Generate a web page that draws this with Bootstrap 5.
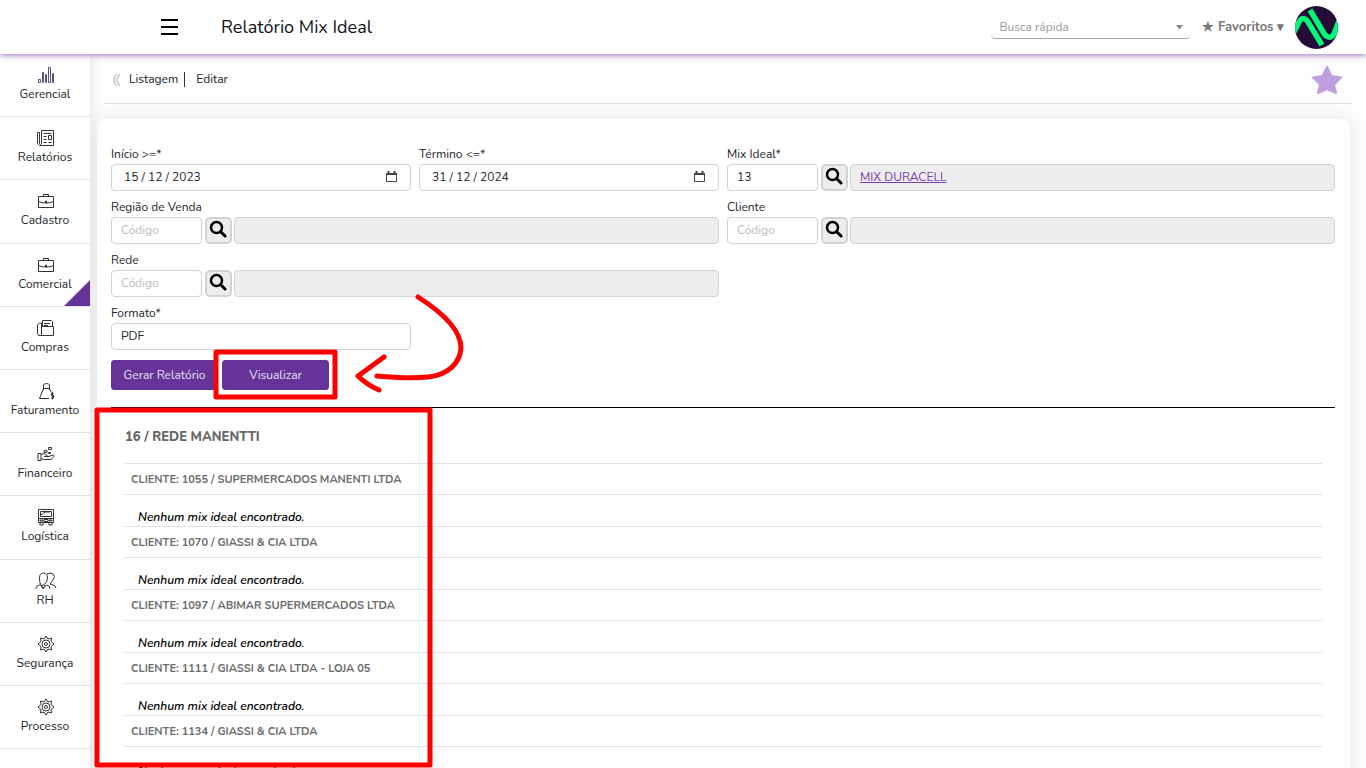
<!DOCTYPE html>
<html lang="pt-BR">
<head>
<meta charset="utf-8">
<meta name="viewport" content="width=device-width, initial-scale=1">
<title>Relatório Mix Ideal</title>
<link href="https://cdn.jsdelivr.net/npm/bootstrap@5.3.0/dist/css/bootstrap.min.css" rel="stylesheet">
<style>
  :root { --brand: #663399; --line: #dee2e6; }
  body { font-family: Nunito, "Noto Sans", sans-serif; font-size: 12px; line-height: 18px; color: #212529; background: #fdfdfd; }
  .topbar { height: 54px; z-index: 3; box-shadow: 0 1px 6px rgba(102,51,153,.7); padding-right: 28px; }
  .menu-toggle { margin-left: 161px; width: 18px; }
  .page-title { font-size: 18px; line-height: 24px; color: #111; margin-left: 42px; }
  .quick-search { width: 199px; margin-right: 12px; }
  .quick-search select { appearance: none; width: 100%; height: 23px; border: 0; border-bottom: 1px solid #aaa; border-radius: 4px; padding: 0 8px; color: #999; background: #fff; }
  .quick-search svg { right: 7px; top: 9px; pointer-events: none; }
  .fav-menu { color: #777; font-weight: 700; font-size: 13px; margin-right: 11px; }
  .sidebar { width: 90px; padding-bottom: 19px; box-shadow: 0 0 12px rgba(0,0,0,.12); z-index: 2; }
  .sidebar a { min-height: 50px; padding-top: 12px; border-bottom: 1px solid var(--line); color: #212529; }
  .sidebar svg { display: block; margin: 0 auto 1px; fill: none; stroke: #333; stroke-width: 1; position: relative; left: 1px; }
  .sidebar .current::after { content: ""; position: absolute; right: 0; bottom: 0; border: 13px solid var(--brand); border-top-color: transparent; border-left-color: transparent; }
  .content-area { padding: 0 16px 0 7px; overflow: auto; scrollbar-width: none; }
  .content-area::-webkit-scrollbar { display: none; }
  .crumbs { height: 50px; margin: 0 -2px 15px 7px; border-bottom: 1px solid var(--line); padding: 2px 9px 0 8px; }
  .crumbs a { color: #212529; line-height: 15px; }
  .crumbs a + a { border-left: 1px solid #333; padding-left: 11px; margin-left: 6px; }
  .panel { background: #fff; border-radius: 8px; box-shadow: 0 0 22px rgba(0,0,0,.09); padding: 26px 15px 20px 14px; min-height: calc(100vh - 120px); }
  .fields { --bs-gutter-x: 8px; }
  .field-block { margin-bottom: 7px; }
  .field-block label { display: block; line-height: 19px; }
  .field-block .form-control { font-size: 12px; line-height: 18px; height: 27px; padding: 3px 9px 4px; border-color: #ced4da; border-radius: 4px; color: #212529; background: #fff; }
  .field-block .form-control::placeholder { color: #bbb; }
  .field-block .form-control.date-box { padding-left: 12px; }
  .field-block .form-control.locked { background: #ededed; }
  .date-icon { right: 14px; top: 7px; }
  .code-box { flex: 0 0 91px; margin-right: 3px; }
  .find-btn { flex: 0 0 27px; height: 27px; padding: 0 1px 3px 0; border: 2px solid #ced4da; border-radius: 5px; background: #ededed; margin-right: 2px; }
  .find-btn svg { display: block; margin: auto; }
  .locked a { color: #7b3fa9; }
  .actions { padding-top: 3px; }
  .btn-brand { --bs-btn-color: #e9e0f2; --bs-btn-bg: #663399; --bs-btn-border-color: #663399; --bs-btn-hover-bg: #552a80; --bs-btn-hover-color: #fff; width: 107px; height: 30px; font-size: 12px; line-height: 18px; padding: 0; border-radius: 3px; }
  .report { border-top: 1px solid #000; margin-top: 17px; padding: 20px 13px 0 14px; }
  .report h2 { font-size: 13px; line-height: 18px; font-weight: 800; color: #666; margin: 0 0 17px; }
  .report table { width: 100%; }
  .report th { height: 31px; font-size: 11px; font-weight: 700; color: #6c6c6c; border: solid #dee2e6; border-width: 1px 0; padding: 1px 6px 0; }
  .report td { height: 32px; font-style: italic; font-weight: 600; color: #000; vertical-align: bottom; padding: 0 13px; }
  .marks { z-index: 5; pointer-events: none; }
</style>
</head>
<body class="vh-100 d-flex flex-column overflow-hidden position-relative">
<header class="topbar bg-white d-flex align-items-center flex-shrink-0 position-relative">
  <button class="menu-toggle btn p-0 border-0 rounded-0" type="button" aria-label="Menu"><svg class="d-block" width="18" height="18" stroke="#000" stroke-width="2"><path d="M0 2h17M0 9h17M0 16h17"/></svg></button>
  <h1 class="page-title mb-0 fw-normal">Relatório Mix Ideal</h1>
  <div class="quick-search position-relative ms-auto">
    <select aria-label="Busca rápida"><option>Busca rápida</option></select>
    <svg class="position-absolute" width="7" height="5" fill="#888"><path d="M0 0h7L3.500 4.500z"/></svg>
  </div>
  <a class="fav-menu text-decoration-none" href="#">★ Favoritos ▾</a>
  <svg width="43" height="43" viewBox="0 0 43 43" aria-label="Logo"><defs><clipPath id="disc"><circle cx="21.500" cy="21.500" r="21.500"/></clipPath></defs><g clip-path="url(#disc)"><path fill="#260a37" d="M0 0h43v43H0z"/><g fill="none" stroke="#00f876" stroke-width="5.500"><path d="M-1 26L4 16Q8 9 13 16L27 39"/><path d="M15 4L30 29Q35 34 39 28L44 15"/></g></g></svg>
</header>
<div class="d-flex flex-fill" style="min-height:0">
  <nav class="sidebar bg-white d-flex flex-column flex-shrink-0 text-center">
    <a class="flex-fill text-decoration-none" href="#"><svg width="18" height="18"><path d="M1.500 16.500v-3h2v3zM5.500 16.500v-10h1v10zM8.500 16.500v-8h1v8zM11.500 16.500v-15h2v15zM15.500 16.500v-9h1v9z" stroke="#555577"/></svg>Gerencial</a>
    <a class="flex-fill text-decoration-none" href="#"><svg width="18" height="18"><path d="M4.500 1.500h12v15h-14l-2-2v-11h2v11l1 1 1-1zM6.500 4.500h8M6.500 7.500h3M6.500 10.500h3M6.500 13.500h3M11.500 6.500h3v4h-3zM11.500 13.500h3"/></svg>Relatórios</a>
    <a class="flex-fill text-decoration-none" href="#"><svg width="18" height="18"><path d="M1.500 4.500h15v11h-15zM6.500 4v-1.500h5v1.500M1.500 9.500c4 2 11 2 15 0M8.500 9v2h1v-2z"/></svg>Cadastro</a>
    <a class="current flex-fill text-decoration-none position-relative" href="#"><svg width="18" height="18"><path d="M1.500 4.500h15v11h-15zM6.500 4v-1.500h5v1.500M1.500 9.500c4 2 11 2 15 0M8.500 9v2h1v-2z"/></svg>Comercial</a>
    <a class="flex-fill text-decoration-none" href="#"><svg width="18" height="18"><path d="M4.500 7.500h12v9h-12zM4.500 16.500h-3l-1-2V6l2-2h2v12M5.500 7V1.500h9l1 1V7M7 4.500h6M7 6.500h4"/></svg>Compras</a>
    <a class="flex-fill text-decoration-none" href="#"><svg width="18" height="18"><path d="M12 16.500H2.500l4-10h6l2 4M6.500 8V3q.5-1.500 3-1.500t3 1.500v5M16.500 11.500h-2v2h2v2.500h-2.500M15.500 10v7.500"/></svg>Faturamento</a>
    <a class="flex-fill text-decoration-none" href="#"><svg width="18" height="18"><path d="M1 8.500h3v7H1zM4 9.500l3-1 4 3h-4M10 12l6-2c2 0 0 3-2 4.500H7l-3-1M7 5.500h3v2H7zM11.500 2.500h3v2h-3zM11.500 7.500h2v1h-2z"/></svg>Financeiro</a>
    <a class="flex-fill text-decoration-none" href="#"><svg width="18" height="18"><path d="M1.500 1.500h15v13h-15zM3.500 3.500h11v5h-11zM2 10.500h14M3 12h3v1H3zM12 12h3v1h-3zM7 11.500h4v2H7zM3 15v2h3v-2M12 15v2h3v-2M4 7l4-3h5"/></svg>Logística</a>
    <a class="flex-fill text-decoration-none" href="#"><svg width="24" height="18"><path d="M5.500 6q0-5 4-5t4 5-4 7-4-7M2 17q0-4 4.500-4l3 3 3-3q3.500 0 3.500 4M13 2q3-2 6 0t0 6l-3 4q6 1 6 4M7 13l2 4 2-4"/></svg>RH</a>
    <a class="flex-fill text-decoration-none" href="#"><svg width="18" height="18"><path d="M9 1l2 3 3.500-1-.5 3.500 3 2.500-3 2.500.5 3.500-3.500-1-2 3-2-3-3.500 1 .5-3.500L1 9l3-2.500L3.500 3 7 4z"/><circle cx="9" cy="9" r="4"/><circle cx="9" cy="9" r="1.500"/></svg>Segurança</a>
    <a class="flex-fill text-decoration-none" href="#"><svg width="18" height="18"><path d="M9 1l2 3 3.500-1-.5 3.500 3 2.500-3 2.500.5 3.500-3.500-1-2 3-2-3-3.500 1 .5-3.500L1 9l3-2.500L3.500 3 7 4z"/><circle cx="9" cy="9" r="4"/><circle cx="9" cy="9" r="1.500"/></svg>Processo</a>
  </nav>
  <main class="content-area flex-fill">
    <div class="crumbs d-flex align-items-center">
      <svg class="me-2" width="9" height="12" fill="none" stroke="#aaa"><path d="M4.500 0L1.500 6l3 6M7.500 0L4.500 6l3 6"/></svg>
      <a class="text-decoration-none" href="#">Listagem</a><a class="text-decoration-none" href="#">Editar</a>
      <button class="btn p-0 border-0 ms-auto" type="button" aria-label="Favoritar"><svg class="d-block" width="32" height="30" viewBox="0 0 32 30"><path d="M16 2l4.500 9L30 12.500l-7 7L25 28l-9-4-9 4 2-8.500-7-7L11.500 11z" fill="#c09fe0" stroke="#c09fe0" stroke-width="2" stroke-linejoin="round"/></svg></button>
    </div>
    <section class="panel">
      <form>
        <div class="row fields">
          <div class="col-3 field-block"><label for="ini">Início &gt;=*</label>
            <div class="position-relative"><input class="form-control date-box" id="ini" value="15 / 12 / 2023"><svg class="date-icon position-absolute" width="11" height="12" fill="none" stroke="#444"><path d="M.5 2.500h10v8H.5z"/><path d="M0 3h11M2.500 0v3M8.500 0v3" stroke-width="2"/></svg></div></div>
          <div class="col-3 field-block"><label for="fim">Término &lt;=*</label>
            <div class="position-relative"><input class="form-control date-box" id="fim" value="31 / 12 / 2024"><svg class="date-icon position-absolute" width="11" height="12" fill="none" stroke="#444"><path d="M.5 2.500h10v8H.5z"/><path d="M0 3h11M2.500 0v3M8.500 0v3" stroke-width="2"/></svg></div></div>
          <div class="col-6 field-block"><label for="mix">Mix Ideal*</label>
            <div class="d-flex"><input class="form-control code-box" id="mix" value="13"><button class="find-btn" type="button" aria-label="Buscar mix"><svg width="18" height="18" fill="none" stroke="#000"><circle cx="7.500" cy="7.500" r="5.500" stroke-width="2.500"/><path d="M12 12l4 4" stroke-width="3" stroke-linecap="round"/></svg></button><div class="form-control locked"><a href="#">MIX DURACELL</a></div></div></div>
          <div class="col-6 field-block"><label for="regiao">Região de Venda</label>
            <div class="d-flex"><input class="form-control code-box" id="regiao" placeholder="Código"><button class="find-btn" type="button" aria-label="Buscar região"><svg width="18" height="18" fill="none" stroke="#000"><circle cx="7.500" cy="7.500" r="5.500" stroke-width="2.500"/><path d="M12 12l4 4" stroke-width="3" stroke-linecap="round"/></svg></button><input class="form-control locked" aria-label="Nome da região" readonly></div></div>
          <div class="col-6 field-block"><label for="cliente">Cliente</label>
            <div class="d-flex"><input class="form-control code-box" id="cliente" placeholder="Código"><button class="find-btn" type="button" aria-label="Buscar cliente"><svg width="18" height="18" fill="none" stroke="#000"><circle cx="7.500" cy="7.500" r="5.500" stroke-width="2.500"/><path d="M12 12l4 4" stroke-width="3" stroke-linecap="round"/></svg></button><input class="form-control locked" aria-label="Nome do cliente" readonly></div></div>
          <div class="col-6 field-block"><label for="rede">Rede</label>
            <div class="d-flex"><input class="form-control code-box" id="rede" placeholder="Código"><button class="find-btn" type="button" aria-label="Buscar rede"><svg width="18" height="18" fill="none" stroke="#000"><circle cx="7.500" cy="7.500" r="5.500" stroke-width="2.500"/><path d="M12 12l4 4" stroke-width="3" stroke-linecap="round"/></svg></button><input class="form-control locked" aria-label="Nome da rede" readonly></div></div>
          <div class="w-100"></div>
          <div class="col-3 field-block"><label for="formato">Formato*</label><select class="form-control" id="formato"><option>PDF</option></select></div>
        </div>
        <div class="actions d-flex gap-1"><button class="btn btn-brand" type="button">Gerar Relatório</button><button class="btn btn-brand" type="button">Visualizar</button></div>
      </form>
      <section class="report">
        <h2>16 / REDE MANENTTI</h2>
        <table>
          <tbody>
            <tr><th scope="row">CLIENTE: 1055 / SUPERMERCADOS MANENTI LTDA</th></tr><tr><td>Nenhum mix ideal encontrado.</td></tr>
            <tr><th scope="row">CLIENTE: 1070 / GIASSI &amp; CIA LTDA</th></tr><tr><td>Nenhum mix ideal encontrado.</td></tr>
            <tr><th scope="row">CLIENTE: 1097 / ABIMAR SUPERMERCADOS LTDA</th></tr><tr><td>Nenhum mix ideal encontrado.</td></tr>
            <tr><th scope="row">CLIENTE: 1111 / GIASSI &amp; CIA LTDA - LOJA 05</th></tr><tr><td>Nenhum mix ideal encontrado.</td></tr>
            <tr><th scope="row">CLIENTE: 1134 / GIASSI &amp; CIA LTDA</th></tr><tr><td>Nenhum mix ideal encontrado.</td></tr>
          </tbody>
        </table>
      </section>
    </section>
  </main>
</div>
<!-- red pen notes over the page -->
<svg class="marks position-absolute top-0 start-0" width="480" height="768" fill="none" stroke="#f00" stroke-width="5" stroke-linecap="round" stroke-linejoin="round">
  <rect x="216" y="352" width="119" height="45"/>
  <rect x="97" y="410" width="333" height="355"/>
  <path d="M418 297C440 311 461 329 461 348C460 363 448 375 428 377Q408 379 377 376M384 357L358 376Q367 385 379 390"/>
</svg>
<script src="https://cdn.jsdelivr.net/npm/bootstrap@5.3.0/dist/js/bootstrap.bundle.min.js"></script>
</body>
</html>
